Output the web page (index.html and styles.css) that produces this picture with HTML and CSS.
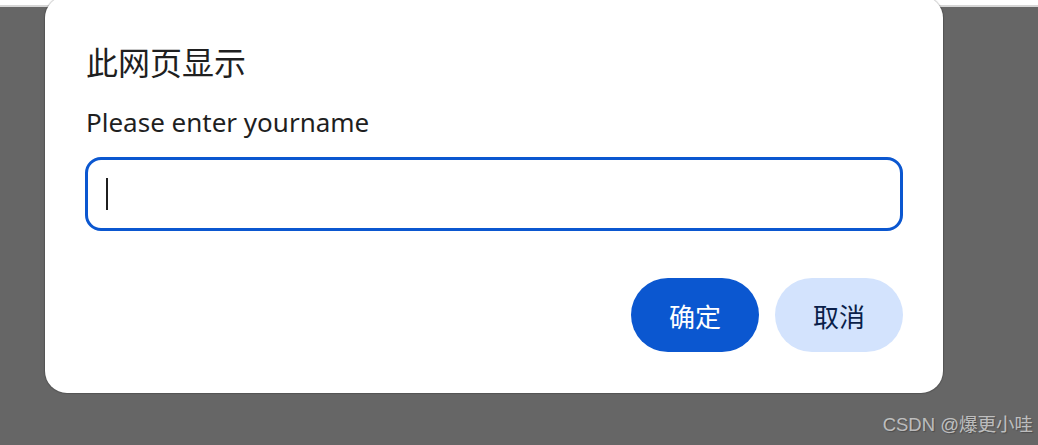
FILE: index.html
```html
<!DOCTYPE html>
<html lang="zh">
<head>
<meta charset="utf-8">
<title>prompt</title>
<link rel="stylesheet" href="styles.css">
</head>
<body>
<div class="topbar"></div>
<div class="dialog">
  <h1 class="title">此网页显示</h1>
  <p class="message">Please enter yourname</p>
  <div class="field"><span class="caret"></span></div>
  <div class="actions">
    <button class="btn btn-primary">确定</button>
    <button class="btn btn-secondary">取消</button>
  </div>
</div>
<div class="watermark">CSDN @爆更小哇</div>
</body>
</html>
```
FILE: styles.css
```css
html, body {
  margin: 0;
  padding: 0;
}
body {
  width: 1038px;
  height: 445px;
  background: #666666;
  position: relative;
  overflow: hidden;
  font-family: "Noto Sans", "Noto Sans CJK SC", sans-serif;
}
.topbar {
  height: 5px;
  background: #ffffff;
  border-bottom: 2px solid #d6d6d6;
}
.dialog {
  position: absolute;
  left: 45px;
  top: -4px;
  width: 898px;
  height: 397px;
  box-sizing: border-box;
  background: #ffffff;
  border-radius: 22px;
  box-shadow: 0 0 1px 1px rgba(0,0,0,0.18);
  padding: 45px 40px 40px 40px;
  display: flex;
  flex-direction: column;
}
.title {
  margin: 0 0 0 1px;
  font-family: "Noto Sans CJK SC", sans-serif;
  font-weight: 400;
  font-size: 32px;
  line-height: 40px;
  color: #1f1f1f;
}
.message {
  margin: 23px 0 0 1px;
  font-size: 26px;
  line-height: 36px;
  color: #1f1f1f;
}
.field {
  margin-top: 17px;
  height: 74px;
  flex: none;
  box-sizing: border-box;
  border: 3px solid #0b57d0;
  border-radius: 16px;
  display: flex;
  align-items: center;
  padding-left: 18px;
}
.caret {
  width: 2px;
  height: 32px;
  background: #1f1f1f;
}
.actions {
  margin-top: 47px;
  display: flex;
  justify-content: flex-end;
  gap: 16px;
}
.btn {
  width: 128px;
  height: 74px;
  border: none;
  border-radius: 37px;
  font-family: "Noto Sans CJK SC", sans-serif;
  font-size: 26px;
  padding: 0;
}
.btn-primary {
  background: #0b57d0;
  color: #ffffff;
}
.btn-secondary {
  background: #d3e3fd;
  color: #0a1f4a;
}
.watermark {
  position: absolute;
  right: 5px;
  bottom: 9px;
  font-family: "Liberation Sans", "Noto Sans CJK SC", sans-serif;
  font-size: 18.5px;
  color: rgba(255,255,255,0.62);
  text-shadow: 1px 1px 1px rgba(0,0,0,0.25);
}
```
